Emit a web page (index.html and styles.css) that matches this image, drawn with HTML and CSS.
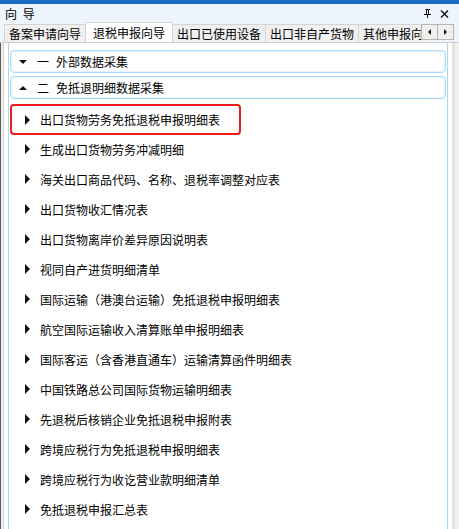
FILE: index.html
```html
<!DOCTYPE html>
<html lang="zh-CN">
<head>
    <meta charset="UTF-8">
    <title>向导</title>
    <link rel="stylesheet" href="styles.css">
</head>
<body>
<div class="win">
    <div class="topbar"></div>
    <div class="title">
        <span class="title-text">向 导</span>
        <span class="tools">
            <svg class="pin" width="8" height="9" viewBox="0 0 8 9">
                <path d="M2 0h4v1h-1v4h2v1h-3v3h-1v-3h-3v-1h2v-4h-1z" fill="#111"/>
                <path d="M3 1h1v4h-1z" fill="#fff"/>
            </svg>
            <svg class="close" width="9" height="8" viewBox="0 0 9 8">
                <path d="M1 0.5l7 7M8 0.5l-7 7" stroke="#111" stroke-width="1.4" fill="none"/>
            </svg>
        </span>
    </div>
    <div class="tabs">
        <div class="tab-list">
            <span class="tab">备案申请向导</span>
            <span class="tab active">退税申报向导</span>
            <span class="tab">出口已使用设备</span>
            <span class="tab">出口非自产货物</span>
            <span class="tab">其他申报向导</span>
        </div>
        <div class="tab-scroll">
            <span class="scroll-btn"><i class="tri-left"></i></span>
            <span class="scroll-btn"><i class="tri-right"></i></span>
        </div>
    </div>
    <div class="body">
        <div class="panel">
            <div class="inner">
                <div class="group"><i class="arr-down"></i><span class="num">一</span>外部数据采集</div>
                <div class="group"><i class="arr-up"></i><span class="num">二</span>免抵退明细数据采集</div>
                <ul class="items">
                    <li class="item selected"><i class="bullet"></i>出口货物劳务免抵退税申报明细表</li>
                    <li class="item"><i class="bullet"></i>生成出口货物劳务冲减明细</li>
                    <li class="item"><i class="bullet"></i>海关出口商品代码、名称、退税率调整对应表</li>
                    <li class="item"><i class="bullet"></i>出口货物收汇情况表</li>
                    <li class="item"><i class="bullet"></i>出口货物离岸价差异原因说明表</li>
                    <li class="item"><i class="bullet"></i>视同自产进货明细清单</li>
                    <li class="item"><i class="bullet"></i>国际运输（港澳台运输）免抵退税申报明细表</li>
                    <li class="item"><i class="bullet"></i>航空国际运输收入清算账单申报明细表</li>
                    <li class="item"><i class="bullet"></i>国际客运（含香港直通车）运输清算函件明细表</li>
                    <li class="item"><i class="bullet"></i>中国铁路总公司国际货物运输明细表</li>
                    <li class="item"><i class="bullet"></i>先退税后核销企业免抵退税申报附表</li>
                    <li class="item"><i class="bullet"></i>跨境应税行为免抵退税申报明细表</li>
                    <li class="item"><i class="bullet"></i>跨境应税行为收讫营业款明细清单</li>
                    <li class="item"><i class="bullet"></i>免抵退税申报汇总表</li>
                </ul>
            </div>
        </div>
    </div>
</div>
</body>
</html>
```

FILE: styles.css
```css
*{
    margin: 0px;
    padding: 0px;
    box-sizing: border-box;
}
body{
    width: 459px;
    height: 529px;
    overflow: hidden;
    background: #fff;
    font-family: "Noto Sans CJK SC", "Noto Sans", sans-serif;
    font-size: 12px;
    color: #000;
}
.win{
    display: flex;
    flex-direction: column;
    height: 529px;
}
.topbar{
    height: 4px;
    background: #1b6cc0;
}
.title{
    height: 19px;
    display: flex;
    align-items: center;
    justify-content: space-between;
    background: #eef5fc;
    padding: 0 10px 0 5px;
}
.title-text{
    word-spacing: 3px;
    font-size: 12px;
}
.tools{
    display: flex;
    align-items: center;
    gap: 8px;
}
.tabs{
    height: 20px;
    display: flex;
    align-items: flex-end;
    background: #eef5fc;
    padding-left: 4px;
    border-bottom: 1px solid #cfcfcf;
}
.tab-list{
    width: 417px;
    display: flex;
    align-items: flex-end;
    overflow: hidden;
    white-space: nowrap;
}
.tab{
    flex: none;
    height: 18px;
    line-height: 17px;
    padding: 0 4px;
    background: #f0f0f0;
    border: 1px solid #d4d4d4;
    border-bottom: none;
    margin-right: -1px;
}
.tab.active{
    height: 21px;
    line-height: 20px;
    padding: 0 7px;
    background: #fff;
    margin-bottom: -1px;
    position: relative;
    z-index: 1;
}
.tab-scroll{
    display: flex;
    margin-bottom: 2px;
}
.scroll-btn{
    width: 17px;
    height: 16px;
    background: #f0f0f0;
    border: 1px solid #b5b5b5;
    display: flex;
    align-items: center;
    justify-content: center;
    margin-right: -1px;
}
.tri-left{
    border-right: 3px solid #111;
    border-top: 3px solid transparent;
    border-bottom: 3px solid transparent;
}
.tri-right{
    border-left: 3px solid #111;
    border-top: 3px solid transparent;
    border-bottom: 3px solid transparent;
}
.body{
    flex: 1;
    display: flex;
    border-left: 1px solid #5a5a5a;
    padding-left: 2px;
    background: #f0f0f0;
    min-height: 0;
}
.panel{
    width: 452px;
    background: #fff;
    border-left: 1px solid #cfcfcf;
    border-right: 3px solid #e3e3e3;
    padding: 0 4px 0 4px;
}
.inner{
    height: 100%;
    border-left: 1px solid #a9d8f7;
    border-right: 1px solid #a9d8f7;
    padding: 7px 1px 0 1px;
}
.group{
    height: 23px;
    display: flex;
    align-items: center;
    border: 1px solid #abd9f7;
    box-shadow: inset 0 0 0 1px #e4f3fd;
    border-radius: 4px;
    padding-left: 8px;
    margin-bottom: 3px;
}
.arr-down{
    width: 0;
    height: 0;
    border-top: 4px solid #111;
    border-left: 4px solid transparent;
    border-right: 4px solid transparent;
    margin-right: 10px;
}
.arr-up{
    width: 0;
    height: 0;
    border-bottom: 4px solid #111;
    border-left: 4px solid transparent;
    border-right: 4px solid transparent;
    margin-right: 10px;
}
.num{
    margin-right: 7px;
}
.items{
    list-style: none;
    margin-top: 5px;
}
.item{
    height: 30px;
    display: flex;
    align-items: center;
    padding-left: 15px;
}
.item.selected{
    width: 231px;
    height: 31px;
    margin-bottom: -1px;
    box-shadow: inset 0 0 0 2px #f11a1a;
    border-radius: 4px;
}
.bullet{
    width: 0;
    height: 0;
    border-left: 5px solid #111;
    border-top: 5px solid transparent;
    border-bottom: 5px solid transparent;
    margin-right: 10px;
}
```
